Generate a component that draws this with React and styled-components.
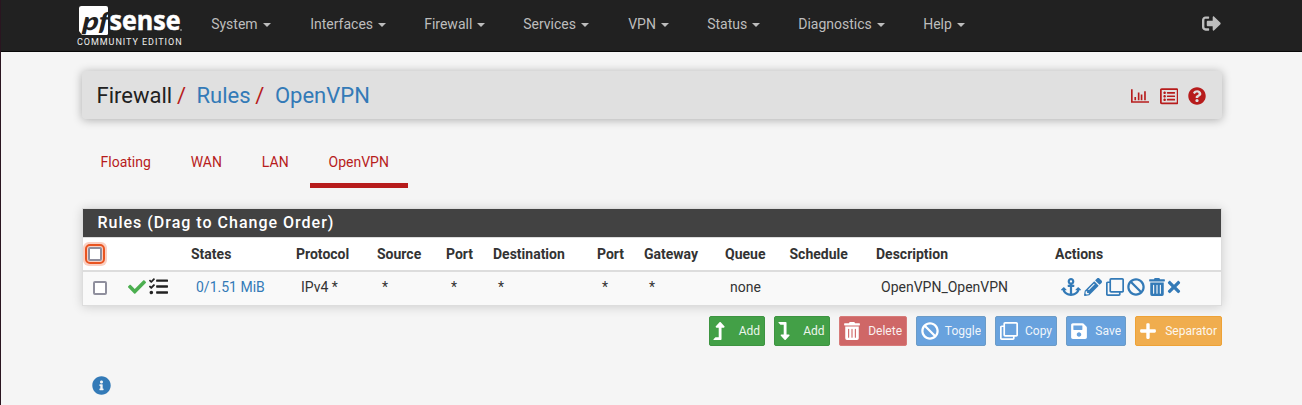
import React from 'react';
import styled, { createGlobalStyle } from 'styled-components';
import {
  FaSignOutAlt, FaRegListAlt, FaQuestionCircle, FaCheck, FaTasks, FaAnchor, FaPencilAlt,
  FaRegClone, FaBan, FaTrashAlt, FaTimes, FaLevelUpAlt, FaLevelDownAlt, FaSave, FaPlus, FaInfoCircle,
} from 'react-icons/fa';

const GlobalStyle = createGlobalStyle`
  * { box-sizing: border-box; }
  html { background: #f5f5f5; }
  body { margin: 0; font: 14px/20px Roboto, sans-serif; color: #333; overflow: hidden; }
  svg { display: block; flex: none; }
`;

const Page = styled.div`
  height: 405px;
  background: #f5f5f5;
  border-left: 1px solid #2a1520;
`;
const Navbar = styled.nav`
  display: flex;
  align-items: flex-start;
  height: 52px;
  padding-left: 75px;
  background: #212121;
  border-bottom: 1px solid #080808;
`;
const Brand = styled.div`
  width: 110px;
  margin-right: 5.2px;
`;
const Edition = styled.div`
  margin-top: -1px;
  padding-left: 1px;
  font-size: 9px;
  line-height: 10px;
  letter-spacing: 0.96px;
  color: #eee;
  white-space: nowrap;
`;
const Menu = styled.div`
  display: flex;
  padding-top: 14px;
`;
const MenuItem = styled.a`
  display: flex;
  align-items: center;
  width: ${(p) => p.$w}px;
  padding-left: 20px;
  color: #bdbdbd;
  &::after {
    content: '';
    margin: 1px 0 0 5px;
    border: 4px solid transparent;
    border-top-color: currentColor;
    border-bottom: 0;
  }
`;
const Logout = styled.a`
  margin: 14px 81px 0 auto;
  color: #bdbdbd;
`;
const Container = styled.main`
  width: 1140px;
  margin: 19px 0 0 81px;
`;
const Header = styled.header`
  display: flex;
  align-items: center;
  justify-content: space-between;
  height: 48px;
  padding: 0 16px 0 14.500px;
  border-radius: 4px;
  background: #e0e0e0;
  box-shadow: 0 1px 10px rgba(0, 0, 0, 0.3);
`;
const Crumbs = styled.ol`
  display: flex;
  margin: 0;
  padding: 2px 0 0;
  list-style: none;
  font-size: 22px;
  line-height: 28px;
`;
const Crumb = styled.li`
  color: ${(p) => (p.$link ? '#337ab7' : '#212121')};
  &:not(:first-child)::before {
    content: '/';
    padding: 0 10.5px 0 4.800px;
    color: #b71c1c;
  }
`;
const HeaderIcons = styled.div`
  display: flex;
  align-items: center;
  gap: 10px;
  padding-top: 2px;
  color: #b71c1c;
`;
const Tabs = styled.div`
  display: flex;
  margin-top: 22px;
`;
const Tab = styled.a`
  height: 47px;
  padding: 11px 19px 0 18.500px;
  margin-right: 2.4px;
  color: #b71c1c;
  border-bottom: 5px solid ${(p) => (p.$active ? '#b71c1c' : 'transparent')};
`;
const Panel = styled.section`
  margin-top: 20px;
  background: #fff;
  border: 1px solid #ddd;
  box-shadow: 0 1px 10px rgba(0, 0, 0, 0.16);
`;
const PanelTitle = styled.h2`
  margin: 0;
  height: 29px;
  padding-left: 14.500px;
  border-bottom: 1px solid #ddd;
  background: #424242;
  color: #fff;
  font: 500 16px/27px Roboto, sans-serif;
  letter-spacing: 1px;
`;
const Table = styled.table`
  width: 1138px;
  table-layout: fixed;
  border-collapse: collapse;
`;
const Th = styled.th`
  height: 33px;
  padding: 0 5px;
  border-bottom: 2px solid #ddd;
  text-align: left;
  font-weight: 700;
`;
const Td = styled.td`
  height: 34px;
  padding: 0 0 4px 10px;
  background: #f9f9f9;
  white-space: nowrap;
  color: ${(p) => (p.$link ? '#337ab7' : '#333')};
`;
const Checkbox = styled.div`
  width: 14px;
  height: 14px;
  border: 2px solid #8f8f9d;
  border-radius: 2px;
  background: #fff;
  ${(p) => p.$focused && 'outline: 2px solid #e95420; outline-offset: 1px; box-shadow: 0 0 0 5px #fad0c3;'}
  margin-top: ${(p) => (p.$focused ? '0' : '3px')};
`;
const IconRow = styled.div`
  display: flex;
  align-items: center;
  gap: 3px;
  color: #337ab7;
`;
const ActionIcons = styled(IconRow)`
  gap: 3.5px;
  padding-left: 0.5px;
  svg:nth-child(5) { margin-left: -1px; }
  svg:last-child { margin-left: -4px; }
`;
const Buttons = styled.div`
  display: flex;
  justify-content: flex-end;
  gap: 9px;
  margin-top: 10px;
`;
const tones = {
  green: ['#43a047', '#3d9441'],
  red: ['#cf6767', '#d77b79'],
  blue: ['#68a2de', '#6b9bc7'],
  orange: ['#f0ad4e', '#eea236'],
};
const Button = styled.button`
  display: flex;
  align-items: center;
  justify-content: space-between;
  width: ${(p) => p.$w}px;
  height: 30px;
  padding: 0 4px;
  border: 1px solid ${(p) => tones[p.$tone][1]};
  border-radius: 2px;
  background: ${(p) => tones[p.$tone][0]};
  color: #fff;
  font: 12px/18px Roboto, sans-serif;
  span { opacity: 0.9; }
  svg { margin-left: ${(p) => -p.$shift}px; }
`;
const Info = styled.div`
  margin: 30px 0 0 10px;
  color: #337ab7;
`;

const Logo = () => (
  <svg width="110" height="38" viewBox="76 0 110 38">
    <path fill="#fff" d="M81.500 6H106q2 0 2 2V33.500q0 1.500-1.500 1.500H82L79 31V8Q79 6 81.500 6z" />
    <text x="0" y="0" fontFamily="Lato, sans-serif" fontWeight="900" fontSize="25" fontStyle="italic" fill="#212121" transform="translate(82 29.500) skewX(-5)" textLength="26" lengthAdjust="spacingAndGlyphs">pf</text>
    <text x="109.500" y="30" fontFamily="Open Sans, sans-serif" fontWeight="700" fontSize="26" fill="#fff" stroke="#fff" strokeWidth="0.500" textLength="71" lengthAdjust="spacingAndGlyphs">sense</text>
    <circle cx="181" cy="30" r="1" fill="#888" />
  </svg>
);

const ChartIcon = () => (
  <svg width="18.5" height="15" viewBox="0 0 19 15" fill="currentColor">
    <path d="M0 0h1.700v12.300H18.500V14H0zM3.500 8H5.200v3.300H3.500zM7 3.500h1.700v7.800H7zM10 5.500h1.700v5.800H10zM13.500 2h1.700v9.300h-1.700z" />
  </svg>
);

const menu = [
  ['System', 99], ['Interfaces', 114], ['Firewall', 99], ['Services', 105],
  ['VPN', 79], ['Status', 91], ['Diagnostics', 125], ['Help', 80],
];
const tabs = ['Floating', 'WAN', 'LAN', 'OpenVPN'];
const columns = [
  [35], [68], [105, 'States', '0/1.51 MiB'], [81, 'Protocol', 'IPv4 *'], [69, 'Source', '*'],
  [47, 'Port', '*'], [104, 'Destination', '*'], [47, 'Port', '*'], [81, 'Gateway', '*'],
  [64.5, 'Queue', 'none'], [86.500, 'Schedule', ''], [179, 'Description', 'OpenVPN_OpenVPN'], [171, 'Actions'],
];
const data = columns.slice(2, 12);
const buttons = [
  ['Add', 'green', 56, FaLevelUpAlt, 4.5], ['Add', 'green', 55.500, FaLevelDownAlt, 4.5],
  ['Delete', 'red', 68.500, FaTrashAlt, 1], ['Toggle', 'blue', 70, FaBan, 0],
  ['Copy', 'blue', 62, FaRegClone, 0], ['Save', 'blue', 60, FaSave, 1],
  ['Separator', 'orange', 87, FaPlus, 1.5],
];

export default function App() {
  return (
    <Page>
      <GlobalStyle />
      <Navbar>
        <Brand>
          <Logo />
          <Edition>COMMUNITY EDITION</Edition>
        </Brand>
        <Menu>{menu.map(([m, w]) => <MenuItem key={m} $w={w}>{m}</MenuItem>)}</Menu>
        <Logout><FaSignOutAlt size={19} /></Logout>
      </Navbar>
      <Container>
        <Header>
          <Crumbs>
            <Crumb>Firewall</Crumb>
            <Crumb $link>Rules</Crumb>
            <Crumb $link>OpenVPN</Crumb>
          </Crumbs>
          <HeaderIcons>
            <ChartIcon />
            <FaRegListAlt size={18.5} />
            <FaQuestionCircle size={18} />
          </HeaderIcons>
        </Header>
        <Tabs>{tabs.map((t) => <Tab key={t} $active={t === 'OpenVPN'}>{t}</Tab>)}</Tabs>
        <Panel>
          <PanelTitle>Rules (Drag to Change Order)</PanelTitle>
          <Table>
            <colgroup>{columns.map(([w], i) => <col key={i} style={{ width: w }} />)}</colgroup>
            <thead>
              <tr>
                <Th><Checkbox $focused /></Th>
                <Th />
                {data.map(([, h], i) => <Th key={i}>{h}</Th>)}
                <Th>Actions</Th>
              </tr>
            </thead>
            <tbody>
              <tr>
                <Td><Checkbox /></Td>
                <Td>
                  <IconRow>
                    <FaCheck size={18} color="#4caf50" />
                    <FaTasks size={19} color="#212121" />
                  </IconRow>
                </Td>
                {data.map(([, , v], i) => <Td key={i} $link={i === 0}>{v}</Td>)}
                <Td>
                  <ActionIcons>
                    <FaAnchor size={20} />
                    <FaPencilAlt size={18} />
                    <FaRegClone size={18} />
                    <FaBan size={18} />
                    <FaTrashAlt size={18} />
                    <FaTimes size={18} />
                  </ActionIcons>
                </Td>
              </tr>
            </tbody>
          </Table>
        </Panel>
        <Buttons>
          {buttons.map(([label, tone, w, Icon, shift], i) => (
            <Button key={i} $tone={tone} $w={w} $shift={shift}><Icon size={18} /><span>{label}</span></Button>
          ))}
        </Buttons>
        <Info><FaInfoCircle size={19} /></Info>
      </Container>
    </Page>
  );
}
